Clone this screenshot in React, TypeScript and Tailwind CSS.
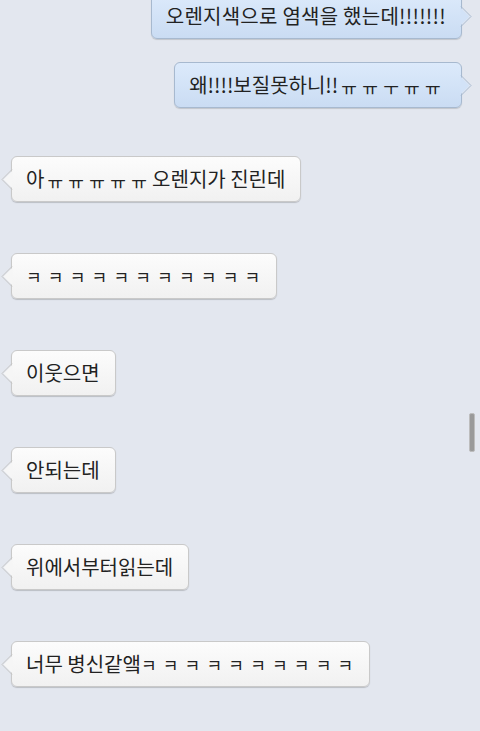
import React from "react";

const FONT = { fontFamily: '"Noto Sans CJK KR", "Noto Sans", sans-serif' };

function Kk({ children }: { children: string }) {
  return <span className="text-[17px] tracking-[1.2px]">{children}</span>;
}

function Yu({ children }: { children: string }) {
  return <span className="text-[17px] tracking-[5.3px] relative top-[2px] ml-[3px]">{children}</span>;
}

function LeftBubble({ children, className = "" }: { children: React.ReactNode; className?: string }) {
  return (
    <div className={"relative self-start ml-[11px] " + className}>
      <div className="h-[46px] flex items-center pl-[14px] pr-[15px] rounded-[6px] border border-[#c9c9c9] bg-gradient-to-b from-[#fcfcfc] to-[#f1f1f1] shadow-[0_1px_1px_rgba(0,0,0,0.18)] text-[20px] text-[#222] whitespace-nowrap">
        <span>{children}</span>
      </div>
      <svg className="absolute left-[-10px] top-[13px]" width="12" height="21" viewBox="0 0 12 21">
        <path d="M11 0.5 L1 10.5 L11 20.5" fill="none" stroke="#c4c4c4" strokeWidth="1" />
        <path d="M11.5 1.5 L2.5 10.5 L11.5 19.5 Z" fill="#f6f6f6" />
      </svg>
    </div>
  );
}

function RightBubble({ children, className = "" }: { children: React.ReactNode; className?: string }) {
  return (
    <div className={"relative self-end mr-[18px] " + className}>
      <div className="h-[46px] flex items-center pl-[14px] pr-[15px] rounded-[6px] border border-[#a7b9cf] bg-gradient-to-b from-[#dceafb] to-[#cadcf3] shadow-[0_1px_1px_rgba(0,0,0,0.15)] text-[20px] text-[#222] whitespace-nowrap">
        <span>{children}</span>
      </div>
      <svg className="absolute right-[-10px] top-[13px]" width="12" height="21" viewBox="0 0 12 21">
        <path d="M1 0.5 L11 10.5 L1 20.5" fill="none" stroke="#a7b9cf" strokeWidth="1" />
        <path d="M0.5 1.5 L9.5 10.5 L0.5 19.5 Z" fill="#d2e2f7" />
      </svg>
    </div>
  );
}

export default function App() {
  return (
    <div className="relative w-[480px] h-[731px] overflow-hidden bg-[#e3e7ef]" style={FONT}>
      <div className="flex flex-col">
        <RightBubble className="mt-[-7px]">
          <span className="tracking-[0.25px]">오렌지색으로 염색을 했는데!!!!!!!</span>
        </RightBubble>
        <RightBubble className="mt-[23px]">
          왜!!!!보질못하니!!<Yu>ㅠㅠㅜㅠㅠ</Yu>
        </RightBubble>
        <LeftBubble className="mt-[48px]">
          아<Yu>ㅠㅠㅠㅠㅠ</Yu>오렌지가 진린데
        </LeftBubble>
        <LeftBubble className="mt-[51px]">
          <Kk>ㅋ ㅋ ㅋ ㅋ ㅋ ㅋ ㅋ ㅋ ㅋ ㅋ ㅋ</Kk>
        </LeftBubble>
        <LeftBubble className="mt-[51px]">이웃으면</LeftBubble>
        <LeftBubble className="mt-[51px]">안되는데</LeftBubble>
        <LeftBubble className="mt-[51px]">위에서부터읽는데</LeftBubble>
        <LeftBubble className="mt-[51px]">
          너무 병신같앸<Kk>ㅋ ㅋ ㅋ ㅋ ㅋ ㅋ ㅋ ㅋ ㅋ ㅋ</Kk>
        </LeftBubble>
      </div>
      <div className="absolute left-[469px] top-[413px] w-[6px] h-[39px] rounded-[2px] bg-[#9a9a9a] border border-[#bdbdbd]" />
    </div>
  );
}
